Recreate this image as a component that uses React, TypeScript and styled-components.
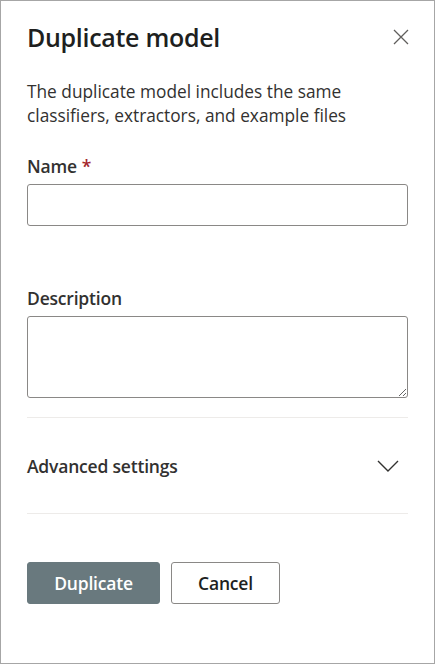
import React from "react";
import styled, { createGlobalStyle } from "styled-components";

const Global = createGlobalStyle`
  html, body { margin: 0; padding: 0; background: #ffffff; }
  * { box-sizing: border-box; }
  body { font-family: "Open Sans", "Noto Sans", Arial, sans-serif; color: #323130; }
`;

const Panel = styled.div`
  width: 435px;
  height: 664px;
  border: 1px solid #a6a6a6;
  padding: 19px 26px 0 26px;
  display: flex;
  flex-direction: column;
  background: #fff;
`;

const Header = styled.div`
  display: flex;
  align-items: center;
  justify-content: space-between;
  height: 34px;
`;

const Title = styled.h1`
  margin: 0;
  font-size: 25px;
  font-weight: 600;
  line-height: 34px;
  color: #201f1e;
  letter-spacing: -0.3px;
`;

const CloseButton = styled.button`
  border: none;
  background: transparent;
  padding: 0;
  width: 16px;
  height: 16px;
  display: flex;
  align-items: center;
  justify-content: center;
  margin-right: -1px;
  cursor: pointer;
`;

const Intro = styled.p`
  margin: 26px 0 0 0;
  font-size: 17.3px;
  line-height: 24px;
  color: #323130;
  letter-spacing: 0;
`;

const Label = styled.label<{ $top: number }>`
  display: block;
  margin-top: ${(p) => p.$top}px;
  font-size: 17.5px;
  font-weight: 600;
  line-height: 24px;
  color: #323130;
  letter-spacing: -0.2px;
`;

const Required = styled.span`
  color: #a4262c;
  margin-left: 5px;
`;

const TextInput = styled.input`
  display: block;
  margin-top: 6px;
  width: 100%;
  height: 42px;
  border: 1px solid #8a8886;
  border-radius: 3px;
  padding: 0 8px;
  font: inherit;
  outline: none;
`;

const TextArea = styled.textarea`
  display: block;
  margin-top: 6px;
  width: 100%;
  height: 82px;
  border: 1px solid #8a8886;
  border-radius: 3px;
  padding: 6px 8px;
  font: inherit;
  outline: none;
  resize: vertical;
`;

const Divider = styled.div<{ $top: number }>`
  margin-top: ${(p) => p.$top}px;
  height: 1px;
  background: #edebe9;
`;

const AdvancedRow = styled.div`
  height: 95px;
  display: flex;
  align-items: center;
  justify-content: space-between;
  padding-right: 9px;
`;

const AdvancedText = styled.span`
  font-size: 17.5px;
  font-weight: 600;
  color: #323130;
  letter-spacing: -0.2px;
`;

const Buttons = styled.div`
  margin-top: 48px;
  display: flex;
  gap: 11px;
`;

const Button = styled.button<{ $primary?: boolean; $width: number }>`
  width: ${(p) => p.$width}px;
  height: 42px;
  border-radius: 3px;
  font-family: inherit;
  font-size: 17.5px;
  font-weight: 600;
  letter-spacing: -0.2px;
  cursor: pointer;
  border: 1px solid ${(p) => (p.$primary ? "#69797e" : "#8a8886")};
  background: ${(p) => (p.$primary ? "#69797e" : "#ffffff")};
  color: ${(p) => (p.$primary ? "#ffffff" : "#201f1e")};
`;

export default function App() {
  return (
    <>
      <Global />
      <Panel>
        <Header>
          <Title>Duplicate model</Title>
          <CloseButton aria-label="Close">
            <svg width="16" height="16" viewBox="0 0 16 16">
              <path d="M1 1 L15 15 M15 1 L1 15" stroke="#605e5c" strokeWidth="1.3" fill="none" />
            </svg>
          </CloseButton>
        </Header>
        <Intro>
          The duplicate model includes the same classifiers, extractors, and example files
        </Intro>
        <Label $top={26}>
          Name<Required>*</Required>
        </Label>
        <TextInput />
        <Label $top={60}>Description</Label>
        <TextArea />
        <Divider $top={19} />
        <AdvancedRow>
          <AdvancedText>Advanced settings</AdvancedText>
          <svg width="22" height="12" viewBox="0 0 22 12">
            <path d="M1 1 L11 11 L21 1" stroke="#323130" strokeWidth="1.4" fill="none" />
          </svg>
        </AdvancedRow>
        <Divider $top={0} />
        <Buttons>
          <Button $primary $width={133}>Duplicate</Button>
          <Button $width={109}>Cancel</Button>
        </Buttons>
      </Panel>
    </>
  );
}
